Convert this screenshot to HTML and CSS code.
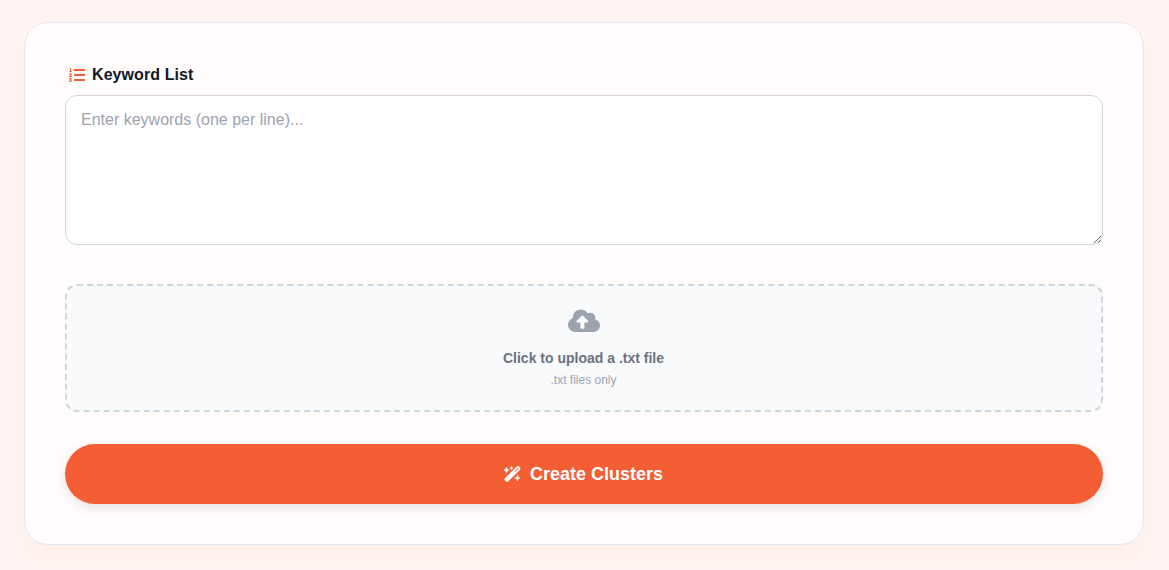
FILE: index.html
```html
<!DOCTYPE html>
<html lang="en">
<head>
<meta charset="utf-8">
<title>Keyword Clusters</title>
<link rel="stylesheet" href="styles.css">
</head>
<body>
<main class="card">
  <label class="field-label" for="keywords">
    <svg class="label-icon" viewBox="0 0 512 512" aria-hidden="true">
      <path d="M61.770 401l17.500-20.150a19.920 19.920 0 0 0 5.070-14.190v-3.310C84.340 356 80.500 352 73 352H16a8 8 0 0 0-8 8v16a8 8 0 0 0 8 8h22.830a157.410 157.410 0 0 0-11 12.310l-5.610 7c-4 5.070-5.250 10.130-2.800 14.880l1.050 1.930c3 5.760 6.290 7.880 12.250 7.880h4.730c10.330 0 15.940 2.440 15.940 9.090 0 4.720-4.200 8.220-14.360 8.220a41.540 41.540 0 0 1-15.470-3.120c-6.490-3.880-11.740-3.500-15.600 3.120l-5.590 9.310c-3.720 6.130-3.190 11.720 2.630 15.940 7.710 4.690 20.380 9.440 37 9.440 34.160 0 48.500-22.750 48.500-44.120-.03-14.380-9.120-29.760-28.730-34.880zM496 224H176a16 16 0 0 0-16 16v32a16 16 0 0 0 16 16h320a16 16 0 0 0 16-16v-32a16 16 0 0 0-16-16zm0-160H176a16 16 0 0 0-16 16v32a16 16 0 0 0 16 16h320a16 16 0 0 0 16-16V80a16 16 0 0 0-16-16zm0 320H176a16 16 0 0 0-16 16v32a16 16 0 0 0 16 16h320a16 16 0 0 0 16-16v-32a16 16 0 0 0-16-16zM16 160h64a8 8 0 0 0 8-8v-16a8 8 0 0 0-8-8H64V40a8 8 0 0 0-8-8H32a8 8 0 0 0-7.140 4.420l-8 16A8 8 0 0 0 24 64h8v64H16a8 8 0 0 0-8 8v16a8 8 0 0 0 8 8zM12 320h68a8 8 0 0 0 8-8v-16a8 8 0 0 0-8-8H41.320c3.290-10.290 48.340-18.680 48.340-56.440 0-29.060-25-39.560-44.470-39.560-21.360 0-33.800 10-40.460 18.750-4.370 5.590-3 10.840 2.800 15.370l8.580 6.880c5.610 4.560 11 2.470 16.120-2.440a13.440 13.440 0 0 1 9.460-3.840c3.330 0 9.280 1.560 9.280 8.750C51 258.860 4 267.670 4 312a8 8 0 0 0 8 8z"/>
    </svg>
    <span>Keyword List</span>
  </label>
  <textarea id="keywords" class="keywords" placeholder="Enter keywords (one per line)..."></textarea>
  <div class="upload">
    <svg class="upload-icon" viewBox="0 0 640 512" aria-hidden="true">
      <path d="M537.600 226.600c4.100-10.700 6.400-22.400 6.400-34.600 0-53-43-96-96-96-19.700 0-38.100 6-53.300 16.200C367 64.200 315.300 32 256 32c-88.400 0-160 71.600-160 160 0 2.700.1 5.400.2 8.100C40.200 219.800 0 273.200 0 336c0 79.500 64.500 144 144 144h368c70.700 0 128-57.300 128-128 0-61.900-44-113.600-102.400-125.400zM393.400 288H328v112c0 8.800-7.200 16-16 16h-48c-8.800 0-16-7.200-16-16V288h-65.400c-14.300 0-21.400-17.200-11.300-27.300l105.400-105.400c6.200-6.200 16.400-6.200 22.600 0l105.400 105.400c10.100 10.100 2.900 27.300-11.300 27.300z"/>
    </svg>
    <p class="upload-title">Click to upload a .txt file</p>
    <p class="upload-note">.txt files only</p>
  </div>
  <button class="submit" type="button">
    <svg class="submit-icon" viewBox="0 0 576 512" aria-hidden="true">
      <path d="M234.700 42.700L197 56.800c-3 1.100-5 4-5 7.200s2 6.100 5 7.200l37.700 14.100L248.800 123c1.100 3 4 5 7.200 5s6.100-2 7.200-5l14.100-37.700L315 71.200c3-1.100 5-4 5-7.200s-2-6.100-5-7.200L277.300 42.700 263.200 5c-1.100-3-4-5-7.200-5s-6.100 2-7.200 5L234.700 42.700zM46.100 395.400c-18.700 18.700-18.700 49.100 0 67.900l34.600 34.600c18.700 18.700 49.100 18.700 67.900 0L529.900 116.500c18.700-18.700 18.700-49.100 0-67.900L495.300 14.100c-18.700-18.700-49.100-18.700-67.900 0L46.100 395.400zM484.600 82.600l-105 105-23.300-23.300 105-105 23.300 23.300zM7.500 117.200C3 118.900 0 123.200 0 128s3 9.100 7.500 10.800L64 160l21.200 56.500c1.700 4.500 6 7.500 10.800 7.500s9.100-3 10.800-7.500L128 160l56.500-21.200c4.500-1.700 7.500-6 7.500-10.800s-3-9.100-7.500-10.800L128 96 106.800 39.500C105.100 35 100.800 32 96 32s-9.100 3-10.800 7.500L64 96 7.500 117.200zm352 256c-4.500 1.700-7.500 6-7.500 10.800s3 9.100 7.500 10.800L416 416l21.200 56.500c1.700 4.500 6 7.500 10.800 7.500s9.100-3 10.800-7.500L480 416l56.500-21.200c4.500-1.700 7.500-6 7.500-10.800s-3-9.100-7.500-10.800L480 352l-21.200-56.500c-1.700-4.500-6-7.500-10.800-7.500s-9.100 3-10.800 7.500L416 352l-56.500 21.200z"/>
    </svg>
    <span>Create Clusters</span>
  </button>
</main>
</body>
</html>
```

FILE: styles.css
```css
* { box-sizing: border-box; }
html, body { height: 100%; }
body {
  margin: 0;
  padding: 22px 25px 25px 24px;
  background: #fff5f2;
  font-family: "Liberation Sans", Arial, sans-serif;
  overflow: hidden;
}
.card {
  height: 523px;
  padding: 40px;
  background: #fffcfb;
  border: 1px solid #e2e8f0;
  border-radius: 24px;
  box-shadow: 0 10px 25px rgba(255, 107, 53, 0.05);
  display: flex;
  flex-direction: column;
}
.field-label {
  display: flex;
  align-items: center;
  gap: 7px;
  height: 24px;
  margin-bottom: 8px;
  padding-left: 4px;
  font-size: 16px;
  font-weight: 700;
  letter-spacing: 0.08px;
  color: #111827;
}
.label-icon { width: 16px; height: 16px; fill: #f35e35; }
.keywords {
  display: block;
  width: 100%;
  height: 150px;
  padding: 15px;
  margin: 0 0 39px;
  background: #fff;
  border: 1px solid #d1d5db;
  border-radius: 12px;
  font: 16px "Liberation Sans", Arial, sans-serif;
  color: #111827;
  outline: none;
}
.keywords::placeholder { color: #9ca3af; opacity: 1; }
.upload {
  height: 128px;
  margin-bottom: 32px;
  padding-top: 21.500px;
  background: #f9fafb;
  border: 2px dashed #d1d5db;
  border-radius: 12px;
  text-align: center;
}
.upload-icon { display: block; width: 32px; height: 25.600px; margin: 0 auto; fill: #9ca3af; }
.upload-title { margin: 15px 0 0; font-size: 14px; line-height: 20px; font-weight: 700; color: #6b7280; transform: translateX(-.5px); }
.upload-note { margin: 4px 0 0; font-size: 12px; line-height: 16px; color: #9ca3af; transform: translateX(-.5px); }
.submit {
  display: flex;
  align-items: center;
  justify-content: center;
  gap: 8px;
  width: 100%;
  height: 60px;
  padding: 0;
  background: #f35e35;
  border: 0;
  border-radius: 30px;
  box-shadow: 0 4px 12px rgba(0, 0, 0, 0.1);
  color: #fff;
  font: 700 18px "Liberation Sans", Arial, sans-serif;
}
.submit-icon { width: 18px; height: 16px; fill: #fff; transform: translateX(-.5px); }
.submit span { transform: translateX(-.5px); }
```
